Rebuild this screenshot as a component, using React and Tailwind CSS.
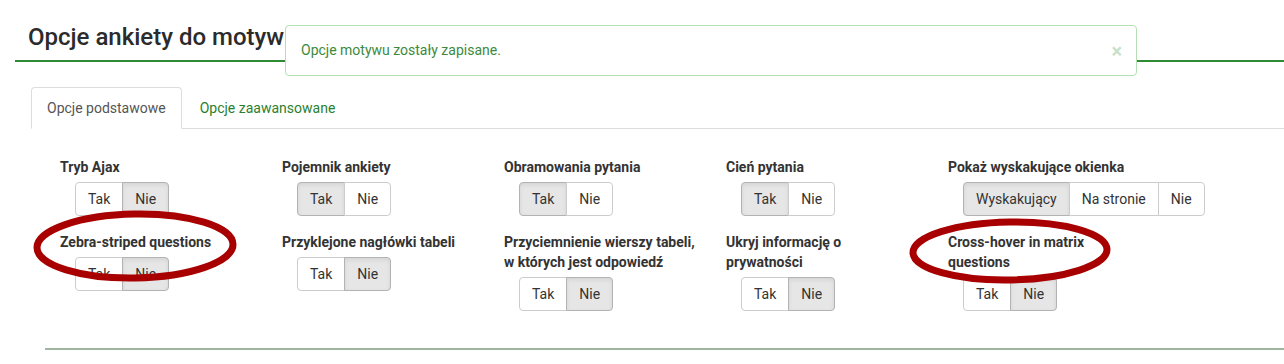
import { useState } from "react";

const fields = [
	{ label: ["Tryb Ajax"], options: ["Tak", "Nie"], value: "Nie" },
	{ label: ["Pojemnik ankiety"], options: ["Tak", "Nie"], value: "Tak" },
	{ label: ["Obramowania pytania"], options: ["Tak", "Nie"], value: "Tak" },
	{ label: ["Cień pytania"], options: ["Tak", "Nie"], value: "Tak" },
	{
		label: ["Pokaż wyskakujące okienka"],
		options: ["Wyskakujący", "Na stronie", "Nie"],
		value: "Wyskakujący",
	},
	{ label: ["Zebra-striped questions"], options: ["Tak", "Nie"], value: "Nie" },
	{ label: ["Przyklejone nagłówki tabeli"], options: ["Tak", "Nie"], value: "Nie" },
	{
		label: ["Przyciemnienie wierszy tabeli,", "w których jest odpowiedź"],
		options: ["Tak", "Nie"],
		value: "Nie",
	},
	{ label: ["Ukryj informację o", "prywatności"], options: ["Tak", "Nie"], value: "Nie" },
	{ label: ["Cross-hover in matrix", "questions"], options: ["Tak", "Nie"], value: "Nie" },
];

const ButtonGroup = ({ options, value, onChange }) => (
	<div className="ml-[15px] flex">
		{options.map((opt, i) => {
			const active = opt === value;
			return (
				<button
					key={opt}
					type="button"
					onClick={() => onChange(opt)}
					className={`h-[34px] px-3 text-[14px] leading-5 text-[#333] border ${
						active
							? "bg-[#e6e6e6] border-[#b3b3b3] shadow-[inset_0_2px_4px_rgba(0,0,0,0.08)]"
							: "bg-white border-[#ccc]"
					} ${i > 0 ? "-ml-px" : ""} ${i === 0 ? "rounded-l" : ""} ${
						i === options.length - 1 ? "rounded-r" : ""
					}`}
				>
					{opt}
				</button>
			);
		})}
	</div>
);

const App = () => {
	const [values, setValues] = useState(fields.map((f) => f.value));
	const [tab, setTab] = useState(0);

	return (
		<div className="relative w-[1284px] h-[364px] overflow-hidden bg-white font-['Roboto',sans-serif]">
			<div className="ml-[15px] pt-[24px] pb-[10px] border-b-2 border-[#2f8a33]">
				<h1 className="ml-[13px] w-[257px] overflow-hidden text-[24px] leading-[26px] font-medium text-[#2b2b2b] whitespace-nowrap">
					Opcje ankiety do motywu
				</h1>
			</div>

			{/* flash message over the header */}
			<div className="absolute left-[285px] top-[25px] w-[852px] h-[51px] flex items-center justify-between pl-[15px] pr-[14px] bg-white border border-[#b5dfb5] rounded text-[14px] text-[#3c8a3c]">
				<span>Opcje motywu zostały zapisane.</span>
				<span className="text-[20px] leading-none font-bold text-[#c9dfc9]">×</span>
			</div>

			<div className="mt-[25px] ml-[31px] flex border-b border-[#ddd]">
				{["Opcje podstawowe", "Opcje zaawansowane"].map((t, i) => (
					<button
						key={t}
						type="button"
						onClick={() => setTab(i)}
						className={`-mb-px mr-[2px] px-[15px] py-[10px] text-[14px] leading-5 border rounded-t ${
							tab === i
								? "bg-white border-[#ddd] border-b-transparent text-[#555]"
								: "border-transparent text-[#2a7f2e]"
						}`}
					>
						{t}
					</button>
				))}
			</div>

			<div className="mt-[28px] ml-[60px] grid grid-cols-[222px_222px_222px_222px_300px] gap-y-4 items-start">
				{fields.map((f, i) => (
					<div key={f.label[0]} className="flex flex-col">
						<label className="mb-[5px] text-[14px] leading-5 font-bold text-[#333] whitespace-nowrap">
							{f.label.map((line) => (
								<span key={line} className="block">
									{line}
								</span>
							))}
						</label>
						<ButtonGroup
							options={f.options}
							value={values[i]}
							onChange={(v) =>
								setValues((prev) => prev.map((p, j) => (j === i ? v : p)))
							}
						/>
					</div>
				))}
			</div>

			<div className="absolute left-[45px] right-0 top-[348px] h-[2px] bg-[#9fb79f]" />

			{/* annotation marks drawn over the screenshot */}
			<svg
				className="absolute inset-0 pointer-events-none"
				width="1284"
				height="364"
				viewBox="0 0 1284 364"
			>
				<ellipse
					cx="135"
					cy="246"
					rx="98"
					ry="32"
					fill="none"
					stroke="#a80000"
					strokeWidth="7"
					transform="rotate(-1 135 246)"
				/>
				<ellipse
					cx="1010"
					cy="251"
					rx="97"
					ry="29"
					fill="none"
					stroke="#a80000"
					strokeWidth="7"
					transform="rotate(-1 1010 251)"
				/>
			</svg>
		</div>
	);
};

export default App;
